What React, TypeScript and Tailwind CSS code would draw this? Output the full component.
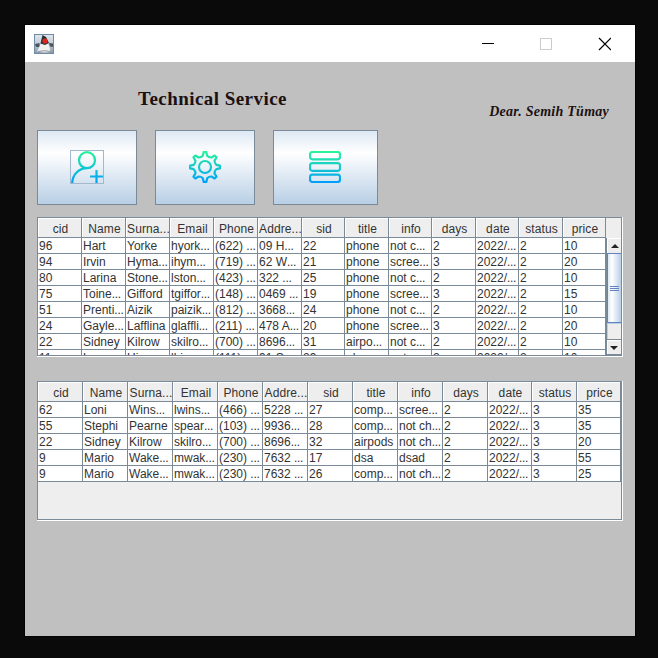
import React from "react";

const HEADS = ["cid", "Name", "Surna...", "Email", "Phone", "Addre...", "sid", "title", "info", "days", "date", "status", "price"];

const ACTIVE = [
  ["96", "Hart", "Yorke", "hyork...", "(622) ...", "09 H...", "22", "phone", "not c...", "2", "2022/...", "2", "10"],
  ["94", "Irvin", "Hyma...", "ihym...", "(719) ...", "62 W...", "21", "phone", "scree...", "3", "2022/...", "2", "20"],
  ["80", "Larina", "Stone...", "lston...", "(423) ...", "322 ...", "25", "phone", "not c...", "2", "2022/...", "2", "10"],
  ["75", "Toine...", "Gifford", "tgiffor...", "(148) ...", "0469 ...", "19", "phone", "scree...", "3", "2022/...", "2", "15"],
  ["51", "Prenti...", "Aizik", "paizik...", "(812) ...", "3668...", "24", "phone", "not c...", "2", "2022/...", "2", "10"],
  ["24", "Gayle...", "Lafflina", "glaffli...", "(211) ...", "478 A...", "20", "phone", "scree...", "3", "2022/...", "2", "20"],
  ["22", "Sidney", "Kilrow", "skilro...", "(700) ...", "8696...", "31", "airpo...", "not c...", "2", "2022/...", "2", "10"],
  ["11", "Lorne", "Higgs", "lhigg...", "(111) ...", "91 S...", "29", "phone", "not c...", "2", "2022/...", "2", "10"],
];

const FINISHED = [
  ["62", "Loni", "Wins...", "lwins...", "(466) ...", "5228 ...", "27", "comp...", "scree...", "2", "2022/...", "3", "35"],
  ["55", "Stephi", "Pearne", "spear...", "(103) ...", "9936...", "28", "comp...", "not ch...", "2", "2022/...", "3", "35"],
  ["22", "Sidney", "Kilrow", "skilro...", "(700) ...", "8696...", "32", "airpods", "not ch...", "2", "2022/...", "3", "20"],
  ["9", "Mario", "Wake...", "mwak...", "(230) ...", "7632 ...", "17", "dsa", "dsad", "2", "2022/...", "3", "55"],
  ["9", "Mario", "Wake...", "mwak...", "(230) ...", "7632 ...", "26", "comp...", "not ch...", "2", "2022/...", "3", "25"],
];

const COLS_NARROW = "grid-cols-[44px_44px_44px_44px_44px_44px_43px_44px_43px_44px_43px_44px_43px]";
const COLS_WIDE = "grid-cols-[45px_45px_45px_45px_45px_45px_45px_45px_45px_45px_44px_45px_44px]";

function Header({ cols }: { cols: string }) {
  return (
    <div className={`grid ${cols} h-5 shrink-0`}>
      {HEADS.map((t) => (
        <div key={t} className="flex items-center justify-center overflow-hidden whitespace-nowrap border-b border-r border-[#7a8a99] bg-[#eeeeee] pl-[2px] pt-[2px] tracking-[0.1px] shadow-[inset_1px_1px_0_#fff]">
          {t}
        </div>
      ))}
    </div>
  );
}

function Cell({ text }: { text: string }) {
  const cut = text.endsWith("...");
  return (
    <div className="overflow-hidden whitespace-nowrap border-b border-r border-[#7a8a99] bg-white pl-px leading-[16px]">
      {cut ? text.slice(0, -3) : text}
      {cut && <span className="tracking-[-0.3px]">...</span>}
    </div>
  );
}

function Rows({ rows, cols }: { rows: string[][]; cols: string }) {
  return (
    <>
      {rows.map((r, i) => (
        <div key={i} className={`grid ${cols} h-4 shrink-0`}>
          {r.map((t, j) => (
            <Cell key={j} text={t} />
          ))}
        </div>
      ))}
    </>
  );
}

function Grad({ id }: { id: string }) {
  return (
    <defs>
      <linearGradient id={id} x1="0" y1="0" x2="0" y2="32" gradientUnits="userSpaceOnUse">
        <stop offset="0" stopColor="#2af598" />
        <stop offset="1" stopColor="#009efd" />
      </linearGradient>
    </defs>
  );
}

function UserPlus() {
  return (
    <svg width="32" height="32" viewBox="0 0 32 32" fill="none" stroke="url(#gu)" strokeWidth="2.2">
      <Grad id="gu" />
      <circle cx="16" cy="9.2" r="8" />
      <path d="M1.200 32C1.500 24 7 17.500 16 17.200M19 25.500H32M25.500 19V32" />
    </svg>
  );
}

function gearPath() {
  const pts: string[] = [];
  for (let i = 0; i < 8; i++) {
    const a = (i * 45 - 90) * (Math.PI / 180);
    const at = (r: number, d: number) => {
      const t = a + (d * Math.PI) / 180;
      return `${(16 + r * Math.cos(t)).toFixed(2)} ${(16 + r * Math.sin(t)).toFixed(2)}`;
    };
    pts.push(`${i ? "L" : "M"}${at(11.5, -11)}L${at(15, -5)}L${at(15, 5)}L${at(11.5, 11)}Q${at(10.2, 22.5)} ${at(11.5, 34)}`);
  }
  return pts.join("") + "Z";
}

function Gear() {
  return (
    <svg width="32" height="32" viewBox="0 0 32 32" fill="none" stroke="url(#gg)" strokeWidth="2.200" strokeLinejoin="round">
      <Grad id="gg" />
      <circle cx="16" cy="16" r="6" />
      <path d={gearPath()} />
    </svg>
  );
}

function Stack() {
  return (
    <svg width="32" height="32" viewBox="0 0 32 32" fill="none" stroke="url(#gs)" strokeWidth="2.2">
      <Grad id="gs" />
      <rect x="1" y="1" width="30" height="7.300" rx="2.4" />
      <rect x="1" y="12.200" width="30" height="7.600" rx="2.4" />
      <rect x="1" y="23.700" width="30" height="7.300" rx="2.4" />
    </svg>
  );
}

function Duke() {
  return (
    <svg width="20" height="20" viewBox="0 0 20 20">
      <defs>
        <linearGradient id="dk" x1="0" y1="0" x2="0" y2="1">
          <stop offset="0" stopColor="#dfe6ee" />
          <stop offset="0.5" stopColor="#c3cdd9" />
          <stop offset="1" stopColor="#8496a9" />
        </linearGradient>
        <filter id="soft"><feGaussianBlur stdDeviation="0.5" /></filter>
      </defs>
      <rect x="0.5" y="0.5" width="19" height="19" fill="url(#dk)" stroke="#6f8ba6" />
      <g filter="url(#soft)">
        <path d="M1 10L5.500 9V13L2 13ZM15 9L19 9.500V13L16 12.500Z" fill="#4c545d" />
        <path d="M3 17.500C5 14 6 11 8 8L13 8C15 11 16 14 16.500 18Q10 19 3 17.500Z" fill="#f1f1ee" />
        <path d="M8.500 1L12 3L15 9L11 11L6.500 9.500Z" fill="#2b3035" />
        <ellipse cx="11" cy="7" rx="2.600" ry="2.600" fill="#e0281e" />
        <path d="M4 17.500Q10 16 17 17.500" fill="none" stroke="#8e959c" />
      </g>
    </svg>
  );
}

const BTN = "flex h-[75px] items-start justify-center border border-[#7a8a99] bg-[linear-gradient(180deg,#dde8f3_0%,#ffffff_30%,#b8cfe5_100%)]";

export default function App() {
  return (
    <div className="h-[658px] w-[658px] overflow-hidden bg-[#0a0a0a] p-[25px] font-['Liberation_Sans',Arial,sans-serif] text-[12px] text-[#333333]">
      <div className="flex h-[611px] w-[610px] flex-col bg-[#c0c0c0] shadow-[0_0_0_1px_#030303]">
        <div className="flex h-[37px] shrink-0 items-center bg-white pl-[9px] pr-6">
          <Duke />
          <svg className="ml-auto" width="130" height="14" viewBox="0 0 130 14" fill="none" shapeRendering="crispEdges">
            <path d="M1 6.500H13" stroke="#000" />
            <rect x="59.500" y="1.500" width="11" height="11" stroke="#cccccc" />
            <path d="M118 1L130 13M130 1L118 13" stroke="#000" shapeRendering="auto" strokeWidth="1.200" />
          </svg>
        </div>

        <div className="flex h-[68px] shrink-0 items-start justify-between pl-[113px] pr-[26px] font-['Liberation_Serif','Times_New_Roman',serif] font-bold text-[#1c1010]">
          <h1 className="mt-[25px] whitespace-nowrap text-[19px] leading-6 tracking-[0.45px]">Technical Service</h1>
          <p className="mt-[41px] whitespace-nowrap text-[14px] italic leading-[18px] tracking-[0.25px]">Dear. Semih Tümay</p>
        </div>

        <div className="flex h-[75px] shrink-0 gap-[18px] pl-3">
          <button className={`${BTN} w-[100px] pt-[19px]`}>
            <span className="border border-[#a3b8cc]"><UserPlus /></span>
          </button>
          <button className={`${BTN} w-[100px] pt-5`}><Gear /></button>
          <button className={`${BTN} w-[105px] pr-px pt-5`}><Stack /></button>
        </div>

        <div className="ml-3 mt-3 h-[140px] w-[586px] shrink-0 border-b border-r border-white">
          <div className="flex h-[139px] flex-col overflow-hidden border border-[#7a8a99]">
            <div className="flex h-5 shrink-0 bg-[#eeeeee]">
              <Header cols={COLS_NARROW} />
            </div>
            <div className="flex h-[117px]">
              <div className="flex w-[568px] flex-col overflow-hidden">
                <Rows rows={ACTIVE} cols={COLS_NARROW} />
              </div>
              <div className="flex w-[15px] flex-col border-l border-[#7a8a99] bg-[#eeeeee]">
                <div className="flex h-[15px] shrink-0 items-center justify-center border-l border-t border-white">
                  <svg width="8" height="4" viewBox="0 0 8 4"><path d="M4 0L8 4H0Z" fill="#222" /></svg>
                </div>
                <div className="flex h-[70px] shrink-0 flex-col items-center justify-center gap-px border border-r-0 border-[#6382bf] bg-[linear-gradient(90deg,#dde8f3_0%,#ffffff_30%,#b8cfe5_100%)]">
                  <i className="h-px w-[9px] bg-[#6382bf]" />
                  <i className="h-px w-[9px] bg-[#6382bf]" />
                  <i className="h-px w-[9px] bg-[#6382bf]" />
                </div>
                <div className="h-4 shrink-0 border-l border-t border-[#b8cfe5]" />
                <div className="flex h-4 shrink-0 items-center justify-center border-b border-t border-[#7a8a99] pt-px shadow-[inset_1px_1px_0_#fff]">
                  <svg width="8" height="4" viewBox="0 0 8 4"><path d="M0 0H8L4 4Z" fill="#222" /></svg>
                </div>
              </div>
            </div>
          </div>
        </div>

        <div className="ml-3 mt-6 h-[140px] w-[586px] shrink-0 border-b border-r border-white">
          <div className="flex h-[139px] flex-col overflow-hidden border border-[#7a8a99] bg-[#eeeeee]">
            <Header cols={COLS_WIDE} />
            <Rows rows={FINISHED} cols={COLS_WIDE} />
          </div>
        </div>
      </div>
    </div>
  );
}
